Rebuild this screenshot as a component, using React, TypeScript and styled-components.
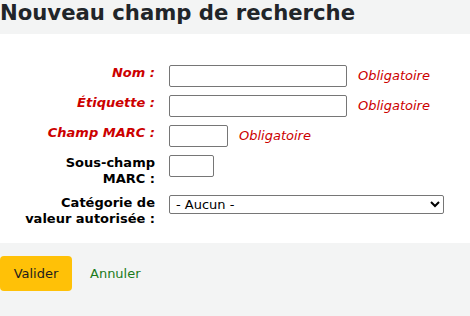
import styled, { createGlobalStyle } from "styled-components";

const GlobalStyle = createGlobalStyle`
  html, body {
    margin: 0;
    padding: 0;
    background-color: #f3f4f4;
    font-family: "DejaVu Sans", "Noto Sans", sans-serif;
    color: #1d1d1d;
  }
`;

const SPage = styled.div`
  width: 470px;
  height: 316px;
  background-color: #f3f4f4;
  overflow: hidden;
`;

const STitle = styled.h1`
  margin: 0;
  height: 34px;
  padding-top: 1px;
  box-sizing: border-box;
  font-size: 21.2px;
  line-height: 24px;
  font-weight: bold;
  color: #212529;
  white-space: nowrap;
`;

const SFieldset = styled.div`
  background-color: #fff;
  padding: 31px 0 8px;
  display: flex;
  flex-direction: column;
`;

const SRow = styled.div`
  display: flex;
  align-items: flex-start;
  margin-bottom: 8px;
`;

const SLabel = styled.label<{ $required?: boolean }>`
  width: 135px;
  margin-left: 20px;
  margin-right: 14px;
  text-align: right;
  font-size: 13px;
  line-height: 16px;
  font-weight: bold;
  color: ${({ $required }) => ($required ? "#cc0000" : "#000")};
  font-style: ${({ $required }) => ($required ? "italic" : "normal")};
`;

const SControl = styled.div`
  display: flex;
  align-items: center;
  gap: 11px;
`;

const SInput = styled.input<{ $width: number }>`
  width: ${({ $width }) => $width}px;
  height: 22px;
  box-sizing: border-box;
  border: 1px solid #767676;
  border-radius: 2px;
  padding: 1px 2px;
  font-family: inherit;
  font-size: 13px;
  background: #fff;
`;

const SSelect = styled.select`
  width: 275px;
  height: 19px;
  box-sizing: border-box;
  border: 1px solid #767676;
  border-radius: 2px;
  padding: 0 2px;
  font-family: "DejaVu Sans", sans-serif;
  font-size: 13px;
  color: #000;
  background: #fff;
`;

const SRequired = styled.span`
  color: #cc0000;
  font-style: italic;
  font-size: 13px;
  line-height: 16px;
`;

const SActions = styled.div`
  display: flex;
  align-items: center;
  gap: 18px;
  padding-top: 13px;
`;

const SButton = styled.button`
  width: 72px;
  height: 35px;
  padding: 0;
  border: none;
  border-radius: 4px;
  background-color: #ffc107;
  color: #1d1d1d;
  font-family: inherit;
  font-size: 13px;
`;

const SCancel = styled.a`
  color: #1a7a1a;
  font-size: 13px;
  text-decoration: none;
`;

const App = () => {
  return (
    <>
      <GlobalStyle />
      <SPage>
        <STitle>Nouveau champ de recherche</STitle>
        <SFieldset>
          <SRow>
            <SLabel $required>Nom :</SLabel>
            <SControl>
              <SInput $width={178} />
              <SRequired>Obligatoire</SRequired>
            </SControl>
          </SRow>
          <SRow>
            <SLabel $required>Étiquette :</SLabel>
            <SControl>
              <SInput $width={178} />
              <SRequired>Obligatoire</SRequired>
            </SControl>
          </SRow>
          <SRow>
            <SLabel $required>Champ MARC :</SLabel>
            <SControl>
              <SInput $width={59} />
              <SRequired>Obligatoire</SRequired>
            </SControl>
          </SRow>
          <SRow>
            <SLabel>Sous-champ MARC :</SLabel>
            <SControl>
              <SInput $width={45} />
            </SControl>
          </SRow>
          <SRow>
            <SLabel>Catégorie de valeur autorisée :</SLabel>
            <SControl>
              <SSelect defaultValue="">
                <option value="">- Aucun -</option>
              </SSelect>
            </SControl>
          </SRow>
        </SFieldset>
        <SActions>
          <SButton>Valider</SButton>
          <SCancel href="#">Annuler</SCancel>
        </SActions>
      </SPage>
    </>
  );
};

export default App;
